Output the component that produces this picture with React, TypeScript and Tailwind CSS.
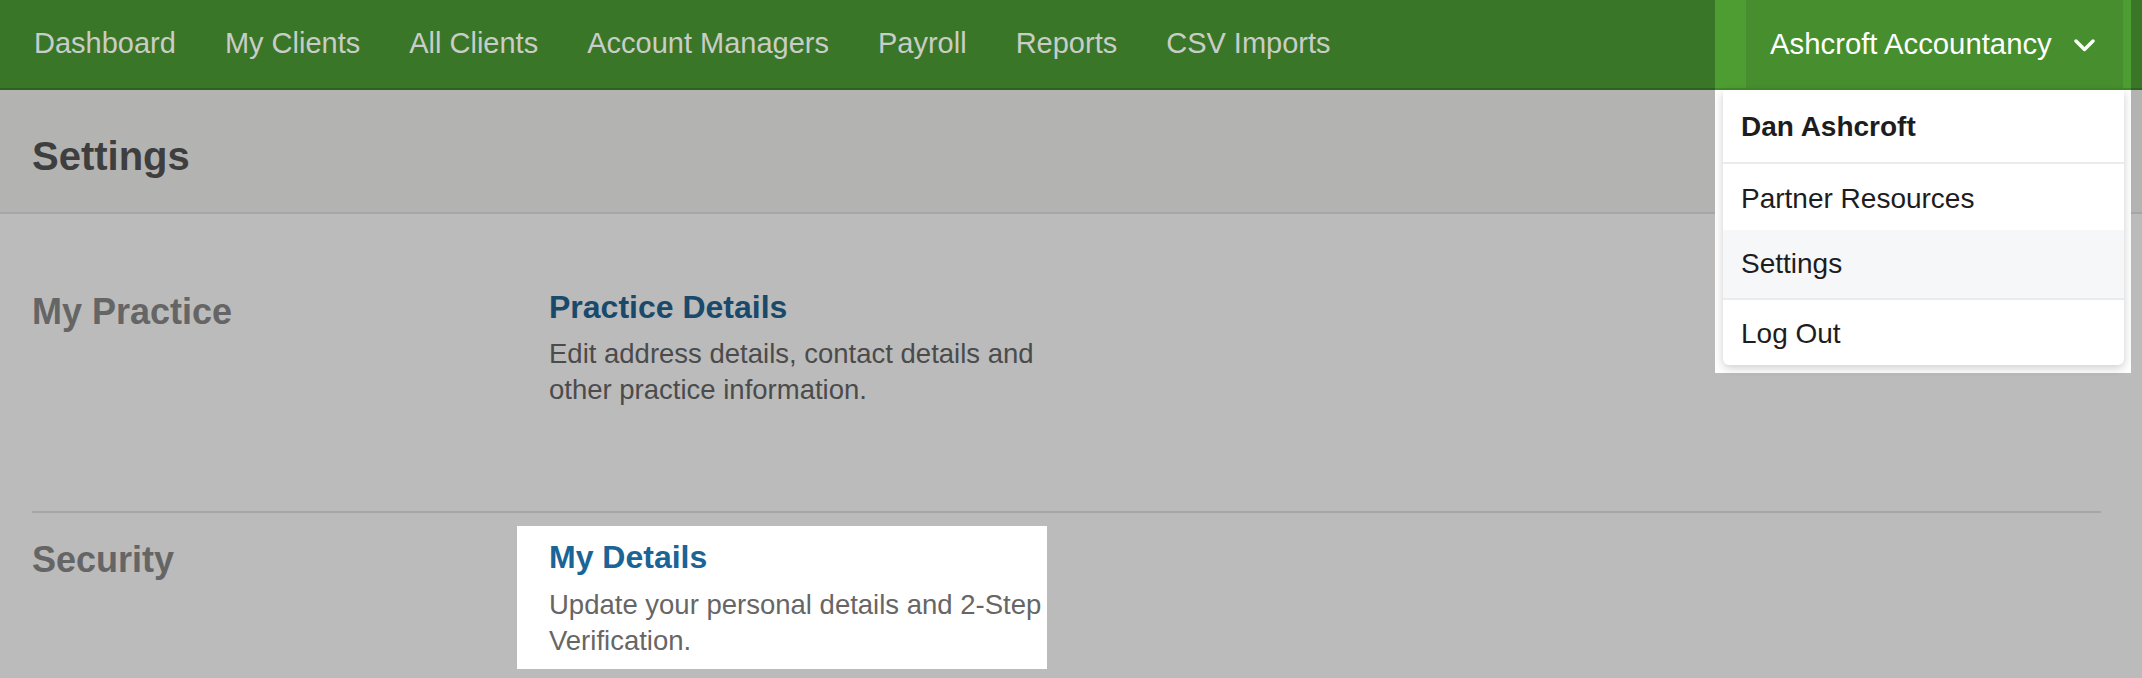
import React from 'react'

const navItems = [
  'Dashboard',
  'My Clients',
  'All Clients',
  'Account Managers',
  'Payroll',
  'Reports',
  'CSV Imports',
]

const font = { fontFamily: '"Liberation Sans", Arial, sans-serif' }

/**
 * Account dropdown (highlighted, not dimmed)
 */
const AccountMenu: React.FC = () => (
  <div className="relative mr-[11px] h-[88px]">
    <div className="flex h-full w-[416px] bg-[#4d9d32] pl-[31px] pr-[8px]">
      <button className="flex h-full w-full items-center bg-[#468e2e] pl-[24px] text-[29.3px] text-white">
        <span>Ashcroft Accountancy</span>
        <svg
          className="ml-[22px] mt-[2px]"
          width="21"
          height="13"
          viewBox="0 0 21 13"
          fill="none"
        >
          <path
            d="M2 2 L10.5 10.5 L19 2"
            stroke="white"
            strokeWidth="3.4"
            strokeLinecap="round"
            strokeLinejoin="round"
          />
        </svg>
      </button>
    </div>
    <div className="absolute left-0 top-[88px] h-[2px] w-[416px] bg-[#3f8a28]" />
    <div className="absolute left-0 top-[90px] z-10 h-[283px] w-[416px] bg-white pl-[8px] pr-[7px]">
      <div className="overflow-hidden rounded-b-[6px] bg-white text-[28px] text-[#1d1d1d] shadow-[0_3px_10px_rgba(0,0,0,0.2)]">
        <div className="flex h-[72px] items-center pl-[18px] pt-[2px] font-bold">
          Dan Ashcroft
        </div>
        <div className="h-[2px] bg-[#e9ecef]" />
        <div className="flex h-[66px] items-center pl-[18px] pt-[4px]">
          Partner Resources
        </div>
        <div className="flex h-[68px] items-center bg-[#f6f7f9] pl-[18px]">
          Settings
        </div>
        <div className="h-[2px] bg-[#e9ecef]" />
        <div className="flex h-[65px] items-center pl-[18px] pt-[2px]">
          Log Out
        </div>
      </div>
    </div>
  </div>
)

export default function App() {
  return (
    <div className="min-h-[678px] w-full bg-[#bbbbbb]" style={font}>
      {/* Top navigation */}
      <nav className="flex h-[90px] items-start justify-between border-b-2 border-[#2f6220] bg-[#3a7628]">
        <ul className="flex h-[88px] items-center gap-[49px] pl-[34px] text-[29px] text-[#c9cdc7]">
          {navItems.map((item) => (
            <li key={item}>{item}</li>
          ))}
        </ul>
        <AccountMenu />
      </nav>

      {/* Page header */}
      <header className="flex h-[124px] items-center border-b-2 border-[#a4a6a8] bg-[#b3b3b2] pl-[32px] pt-[9px]">
        <h1 className="text-[40px] font-bold text-[#3e3e3e]">Settings</h1>
      </header>

      {/* Settings sections */}
      <div className="ml-[32px] mr-[41px]">
        <section className="flex items-start border-b-2 border-[#a6a6a6] pt-[73px] pb-[103px]">
          <h2 className="mt-[3px] w-[485px] text-[36px] leading-[44px] font-bold text-[#656565]">
            My Practice
          </h2>
          <div className="w-[530px] pl-[32px]">
            <h3 className="text-[32px] leading-[40px] font-bold text-[#19496b]">
              Practice Details
            </h3>
            <p className="mt-[9px] text-[27.5px] leading-[36px] text-[#4b4b4b]">
              Edit address details, contact details and other practice
              information.
            </p>
          </div>
        </section>

        <section className="flex items-start pt-[13px]">
          <h2 className="mt-[12px] w-[485px] text-[36px] leading-[44px] font-bold text-[#656565]">
            Security
          </h2>
          <div className="w-[530px] bg-white pt-[11px] pb-[10px] pl-[32px]">
            <h3 className="text-[32px] leading-[40px] font-bold text-[#1b6496]">
              My Details
            </h3>
            <p className="mt-[10px] text-[27.5px] leading-[36px] text-[#666666]">
              Update your personal details and 2-Step Verification.
            </p>
          </div>
        </section>
      </div>
    </div>
  )
}
